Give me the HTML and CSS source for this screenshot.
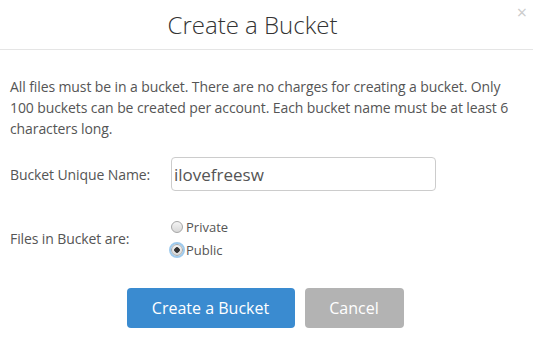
FILE: index.html
```html
<!DOCTYPE html>
<html lang="en">
<head>
  <meta charset="UTF-8" />
  <title>Create a Bucket</title>
  <link rel="stylesheet" href="styles.css">
</head>
<body>
  <div class="modal">

    <div class="modal-header">
      <h1>Create a Bucket</h1>
      <span class="close">&times;</span>
    </div>

    <div class="modal-body">
      <p>All files must be in a bucket. There are no charges for creating a bucket. Only 100 buckets can be created per account. Each bucket name must be at least 6 characters long.</p>

      <!-- Nome -->
      <div class="row name-row">
        <label for="bucket">Bucket Unique Name:</label>
        <input type="text" id="bucket" value="ilovefreesw" />
      </div>

      <!-- Visibilita -->
      <div class="row access-row">
        <label>Files in Bucket are:</label>
        <div class="radios">
          <label class="radio"><input type="radio" name="access" value="private" /> Private</label>
          <label class="radio"><input type="radio" name="access" value="public" checked class="focused" /> Public</label>
        </div>
      </div>
    </div>

    <div class="modal-footer">
      <button class="btn primary">Create a Bucket</button>
      <button class="btn muted">Cancel</button>
    </div>

  </div>
</body>
</html>
```

FILE: styles.css
```css
body {
  font-family: 'Open Sans', sans-serif;
  background-color: #fff;
  margin: 0;
  padding: 0;
  color: #555;
}

.modal {
  width: 533px;
}

.modal-header {
  position: relative;
  height: 50px;
  border-bottom: 1px solid #e5e5e5;
  padding-right: 28px;
  box-sizing: border-box;
}

.modal-header h1 {
  margin: 0;
  text-align: center;
  font-size: 24px;
  font-weight: 300;
  line-height: 50px;
  color: #333;
}

.close {
  position: absolute;
  top: 0;
  right: 6px;
  font-size: 18px;
  line-height: 24px;
  color: #ccc;
}

.modal-body {
  padding: 26px 10px 0 10px;
}

.modal-body p {
  margin: 0;
  font-size: 14px;
  line-height: 21px;
  letter-spacing: -0.1px;
}

.row {
  display: grid;
  grid-template-columns: 161px 1fr;
  align-items: center;
}

.row > label {
  font-size: 14px;
  letter-spacing: -0.1px;
}

.name-row {
  margin-top: 18px;
}

.name-row input {
  width: 265px;
  height: 34px;
  box-sizing: border-box;
  padding: 0 2px;
  border: 1px solid #ccc;
  border-radius: 4px;
  font-family: 'Open Sans', sans-serif;
  font-size: 17px;
  color: #555;
}

.access-row {
  margin-top: 27px;
}

.radios {
  display: flex;
  flex-direction: column;
  gap: 5px;
}

.radio {
  display: flex;
  align-items: center;
  font-size: 13px;
  line-height: 18px;
}

.radio input {
  appearance: none;
  -webkit-appearance: none;
  margin: 0 3px 0 0;
  width: 12px;
  height: 12px;
  border: 1px solid #a6a6a6;
  border-radius: 50%;
  background: linear-gradient(#f4f4f4, #d8d8d8);
  box-sizing: border-box;
}

.radio input:checked {
  background: radial-gradient(circle at 50% 50%, #333 0 2.5px, transparent 3px), linear-gradient(#f4f4f4, #d8d8d8);
}

.radio input.focused {
  outline: 2px solid #9ecaed;
  outline-offset: 0;
  border-radius: 50%;
}

.modal-footer {
  display: flex;
  justify-content: center;
  gap: 10px;
  margin-top: 29px;
  padding-right: 3px;
}

.btn {
  height: 40px;
  border: none;
  border-radius: 4px;
  font-family: 'Open Sans', sans-serif;
  font-size: 16px;
  color: #fff;
  cursor: pointer;
}

.btn.primary {
  width: 168px;
  background-color: #3a8bd0;
}

.btn.muted {
  width: 99px;
  background-color: #b3b3b3;
}
```
